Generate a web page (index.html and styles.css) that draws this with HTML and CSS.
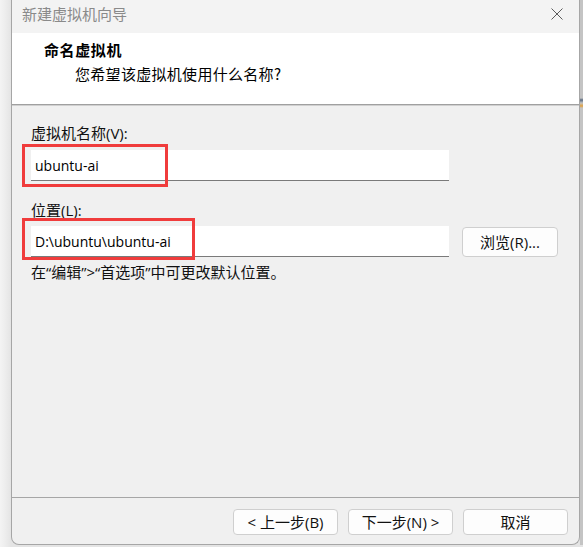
FILE: index.html
```html
<!DOCTYPE html>
<html lang="zh-CN">
<head>
<meta charset="utf-8">
<title>新建虚拟机向导</title>
<link rel="stylesheet" href="styles.css">
</head>
<body>
<div class="desk">
  <div class="window">
    <div class="titlebar">
      <span class="title">新建虚拟机向导</span>
      <svg class="close" width="12" height="12" viewBox="0 0 12 12"><path d="M0.5 0.5 L11.5 11.5 M11.5 0.5 L0.5 11.5" stroke="#5a5a5a" stroke-width="1" fill="none"/></svg>
    </div>
    <div class="header">
      <div class="h-title">命名虚拟机</div>
      <div class="h-sub">您希望该虚拟机使用什么名称?</div>
    </div>
    <div class="content">
      <div class="label">虚拟机名称(V):</div>
      <div class="field name-field"><span>ubuntu-ai</span></div>
      <div class="label loc-label">位置(L):</div>
      <div class="loc-row">
        <div class="field"><span>D:\ubuntu\ubuntu-ai</span></div>
        <button class="btn browse">浏览(R)...</button>
      </div>
      <div class="hint">在“编辑”&gt;“首选项”中可更改默认位置。</div>
    </div>
    <div class="footer">
      <button class="btn fbtn">&lt; 上一步(B)</button>
      <button class="btn fbtn">下一步(N) &gt;</button>
      <button class="btn fbtn">取消</button>
    </div>
    <div class="mark mark-name"></div>
    <div class="mark mark-loc"></div>
  </div>
  <div class="edge"></div>
</div>
</body>
</html>
```
FILE: styles.css
```css
html, body {
  margin: 0;
  padding: 0;
}
body {
  width: 583px;
  height: 547px;
  overflow: hidden;
  background: linear-gradient(to right, #f4f4f4 0px, #ececec 6px, #e4e4e4 11px);
  font-family: "Open Sans", "Noto Sans CJK SC", sans-serif;
  color: #111;
}
.desk {
  display: flex;
  height: 547px;
}
.window {
  position: relative;
  margin-left: 11px;
  width: 567px;
  height: 544px;
  border-left: 1px solid #a6a6a6;
  border-right: 1px solid #a6a6a6;
  border-bottom: 1px solid #a6a6a6;
  border-bottom-left-radius: 8px;
  border-bottom-right-radius: 8px;
  background: #f0f0f0;
  display: flex;
  flex-direction: column;
  overflow: hidden;
}
.edge {
  flex: 1;
  background: linear-gradient(to bottom, #c4c4c4 0, #c4c4c4 98px, #5a6a80 100px, #c4c4c4 103px, #e0a040 106px, #c4c4c4 108px, #c4c4c4 100%);
  height: 545px;
}
.titlebar {
  height: 33px;
  background: #f3f3f3;
  display: flex;
  align-items: center;
  justify-content: space-between;
  padding: 0 16px 0 10px;
  box-sizing: border-box;
}
.title {
  font-family: "Noto Sans CJK SC", sans-serif;
  font-size: 15px;
  color: #8a8a8a;
  line-height: 20px;
  margin-top: -5px;
}
.close {
  margin-top: -5px;
}
.header {
  height: 71px;
  background: #ffffff;
  border-bottom: 1px solid #a0a0a0;
  box-shadow: 0 1px 0 #d0d0d0;
  box-sizing: content-box;
  padding-left: 32px;
  font-family: "Noto Sans CJK SC", sans-serif;
}
.h-title {
  font-size: 15px;
  font-weight: bold;
  line-height: 20px;
  margin-top: 7px;
  letter-spacing: 0.6px;
  color: #000;
}
.h-sub {
  font-size: 15px;
  line-height: 20px;
  margin-top: 4px;
  margin-left: 31px;
  letter-spacing: 0.3px;
  color: #000;
}
.content {
  flex: 1;
  padding: 18px 0 0 19px;
  border-bottom: 1px solid #a6a6a6;
}
.label {
  font-size: 15px;
  line-height: 20px;
  height: 20px;
}
.field {
  width: 418px;
  height: 31px;
  box-sizing: border-box;
  background: #ffffff;
  border-bottom: 1px solid #7a7a7a;
  display: flex;
  align-items: center;
  padding-left: 4px;
  font-size: 14px;
  color: #000;
}
.name-field {
  margin-top: 7px;
}
.loc-label {
  margin-top: 19px;
}
.loc-row {
  margin-top: 6px;
  display: flex;
  align-items: center;
  gap: 13px;
}
.btn {
  font-family: "Open Sans", "Noto Sans CJK SC", sans-serif;
  font-size: 15px;
  color: #111;
  background: #fdfdfd;
  border: 1px solid #cfcfcf;
  border-radius: 4px;
  padding: 0;
  line-height: 20px;
}
.browse {
  width: 96px;
  height: 30px;
  margin-top: 1px;
}
.hint {
  margin-top: 5px;
  font-size: 15px;
  line-height: 20px;
}
.footer {
  height: 46px;
  display: flex;
  justify-content: flex-end;
  align-items: flex-start;
  padding: 11px 11px 0 0;
  box-sizing: border-box;
  gap: 10px;
}
.fbtn {
  width: 105px;
  height: 26px;
}
.mark {
  position: absolute;
  border: 3px solid #f03c3c;
  box-sizing: border-box;
}
.mark-name {
  left: 10px;
  top: 144px;
  width: 146px;
  height: 43px;
}
.mark-loc {
  left: 10px;
  top: 218px;
  width: 173px;
  height: 42px;
}
```
